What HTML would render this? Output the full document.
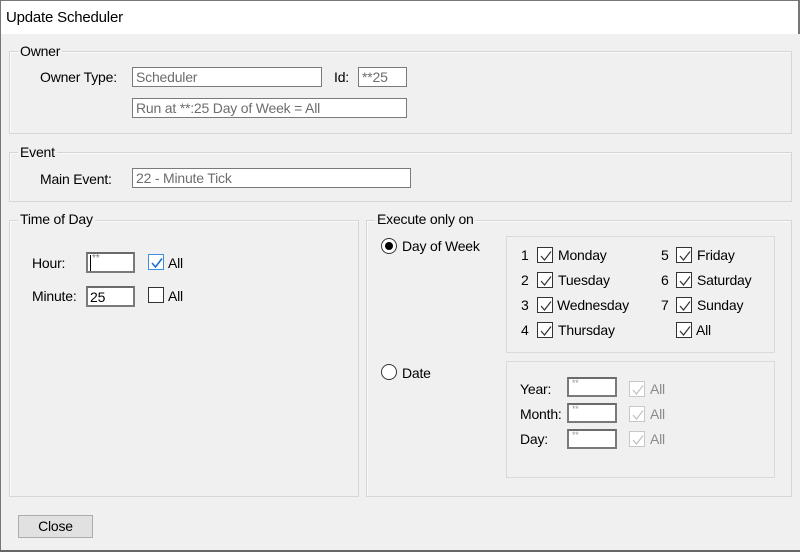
<!DOCTYPE html>
<html><head><style>
*{margin:0;padding:0;box-sizing:border-box}
body{width:800px;height:552px;background:#f0f0f0;font-family:"Liberation Sans",sans-serif;font-size:14px;color:#000;position:relative;overflow:hidden;letter-spacing:-0.2px}
.a{position:absolute;white-space:nowrap}
#title{position:absolute;left:0;top:0;width:800px;height:34px;background:#fff;border-top:1px solid #777;border-left:1px solid #777;border-right:2px solid #777}
.g{position:absolute;border:1px solid #d6d6d6;box-shadow:inset 1px 1px 0 #fafafa}
.lab{position:absolute;background:#f0f0f0;padding:0 2px;line-height:16px}
.in{position:absolute;background:#fff;border:1px solid #7a7a7a;height:20px;color:#6d6d6d;padding-left:3px;line-height:18px}
.gin{position:absolute;background:#fff;border:2px solid #7a7a7a;border-top-color:#6a6a6a}
.cb{position:absolute;width:16px;height:16px;border:1px solid #333;background:#fff}
.cb svg{position:absolute;left:1px;top:1px}
.dis{border-color:#c8c8c8}
.rb{position:absolute;width:16px;height:16px;border:1px solid #333;border-radius:50%;background:#fff}
.ib{position:absolute;border:1px solid #dadada}
</style></head><body>
<div id="title"><div class="a" style="left:5px;top:8px;font-size:15px">Update Scheduler</div></div>
<div class="a" style="left:0;top:34px;width:1px;height:518px;background:#777"></div>
<div class="a" style="left:0;top:550px;width:800px;height:2px;background:#666"></div>

<div class="g" style="left:9px;top:51px;width:783px;height:83px"></div>
<div class="lab" style="left:18px;top:43px">Owner</div>
<div class="a" style="left:40px;top:69px">Owner Type:</div>
<div class="in" style="left:132px;top:67px;width:190px">Scheduler</div>
<div class="a" style="left:334px;top:69px">Id:</div>
<div class="in" style="left:358px;top:67px;width:49px">**25</div>
<div class="in" style="left:132px;top:98px;width:275px">Run at **:25 Day of Week = All</div>

<div class="g" style="left:9px;top:152px;width:783px;height:50px"></div>
<div class="lab" style="left:18px;top:144px">Event</div>
<div class="a" style="left:40px;top:171px">Main Event:</div>
<div class="in" style="left:132px;top:168px;width:279px">22 - Minute Tick</div>

<div class="g" style="left:9px;top:220px;width:350px;height:277px"></div>
<div class="lab" style="left:18px;top:211px">Time of Day</div>
<div class="a" style="left:32px;top:255px">Hour:</div>
<div class="gin" style="left:86px;top:252px;width:49px;height:21px"><div class="a" style="left:2px;top:1px;width:1px;height:16px;background:#000"></div><div class="a" style="left:4px;top:-1px;font-size:10px;color:#777">**</div></div>
<div class="cb" style="left:148px;top:254px;border-color:#3c8ee0"><svg width="14" height="14"><path d="M2 7 L5.5 11 L12 2.5" stroke="#1e6fd0" stroke-width="1.6" fill="none"/></svg></div>
<div class="a" style="left:168px;top:255px">All</div>
<div class="a" style="left:32px;top:288px">Minute:</div>
<div class="gin" style="left:86px;top:286px;width:49px;height:21px"><div class="a" style="left:2px;top:1px">25</div></div>
<div class="cb" style="left:148px;top:287px"></div>
<div class="a" style="left:168px;top:288px">All</div>

<div class="g" style="left:366px;top:220px;width:426px;height:277px"></div>
<div class="lab" style="left:375px;top:211px">Execute only on</div>
<div class="rb" style="left:381px;top:238px"><div class="a" style="left:3px;top:3px;width:8px;height:8px;border-radius:50%;background:#000"></div></div>
<div class="a" style="left:402px;top:238px">Day of Week</div>
<div class="ib" style="left:506px;top:236px;width:269px;height:117px"></div>

<div class="a" style="left:521px;top:247px">1</div><div class="cb" style="left:537px;top:247px"><svg width="14" height="14"><path d="M2 7 L5.5 11 L12 2.5" stroke="#333" stroke-width="1.2" fill="none"/></svg></div><div class="a" style="left:558px;top:247px">Monday</div>
<div class="a" style="left:521px;top:272px">2</div><div class="cb" style="left:537px;top:272px"><svg width="14" height="14"><path d="M2 7 L5.5 11 L12 2.5" stroke="#333" stroke-width="1.2" fill="none"/></svg></div><div class="a" style="left:558px;top:272px">Tuesday</div>
<div class="a" style="left:521px;top:297px">3</div><div class="cb" style="left:537px;top:297px"><svg width="14" height="14"><path d="M2 7 L5.5 11 L12 2.5" stroke="#333" stroke-width="1.2" fill="none"/></svg></div><div class="a" style="left:557px;top:297px">Wednesday</div>
<div class="a" style="left:521px;top:322px">4</div><div class="cb" style="left:537px;top:322px"><svg width="14" height="14"><path d="M2 7 L5.5 11 L12 2.5" stroke="#333" stroke-width="1.2" fill="none"/></svg></div><div class="a" style="left:558px;top:322px">Thursday</div>
<div class="a" style="left:661px;top:247px">5</div><div class="cb" style="left:676px;top:247px"><svg width="14" height="14"><path d="M2 7 L5.5 11 L12 2.5" stroke="#333" stroke-width="1.2" fill="none"/></svg></div><div class="a" style="left:697px;top:247px">Friday</div>
<div class="a" style="left:661px;top:272px">6</div><div class="cb" style="left:676px;top:272px"><svg width="14" height="14"><path d="M2 7 L5.5 11 L12 2.5" stroke="#333" stroke-width="1.2" fill="none"/></svg></div><div class="a" style="left:697px;top:272px">Saturday</div>
<div class="a" style="left:661px;top:297px">7</div><div class="cb" style="left:676px;top:297px"><svg width="14" height="14"><path d="M2 7 L5.5 11 L12 2.5" stroke="#333" stroke-width="1.2" fill="none"/></svg></div><div class="a" style="left:697px;top:297px">Sunday</div>
<div class="cb" style="left:676px;top:322px"><svg width="14" height="14"><path d="M2 7 L5.5 11 L12 2.5" stroke="#333" stroke-width="1.2" fill="none"/></svg></div><div class="a" style="left:696px;top:322px">All</div>

<div class="rb" style="left:381px;top:364px"></div>
<div class="a" style="left:402px;top:365px">Date</div>
<div class="ib" style="left:506px;top:361px;width:269px;height:117px"></div>
<div class="a" style="left:520px;top:381px">Year:</div>
<div class="gin" style="left:567px;top:377px;width:50px;height:20px"><div class="a" style="left:3px;top:-1px;font-size:9px;color:#999">**</div></div>
<div class="cb dis" style="left:629px;top:381px"><svg width="14" height="14"><path d="M2 7 L5.5 11 L12 2.5" stroke="#c0c0c0" stroke-width="1.2" fill="none"/></svg></div><div class="a" style="left:650px;top:381px;color:#8a8a8a">All</div>
<div class="a" style="left:520px;top:406px">Month:</div>
<div class="gin" style="left:567px;top:403px;width:50px;height:20px"><div class="a" style="left:3px;top:-1px;font-size:9px;color:#999">**</div></div>
<div class="cb dis" style="left:629px;top:406px"><svg width="14" height="14"><path d="M2 7 L5.5 11 L12 2.5" stroke="#c0c0c0" stroke-width="1.2" fill="none"/></svg></div><div class="a" style="left:650px;top:406px;color:#8a8a8a">All</div>
<div class="a" style="left:520px;top:431px">Day:</div>
<div class="gin" style="left:567px;top:429px;width:50px;height:20px"><div class="a" style="left:3px;top:-1px;font-size:9px;color:#999">**</div></div>
<div class="cb dis" style="left:629px;top:431px"><svg width="14" height="14"><path d="M2 7 L5.5 11 L12 2.5" stroke="#c0c0c0" stroke-width="1.2" fill="none"/></svg></div><div class="a" style="left:650px;top:431px;color:#8a8a8a">All</div>

<div class="a" style="left:18px;top:515px;width:75px;height:23px;background:#e1e1e1;border:1px solid #adadad;text-align:center;line-height:21px">Close</div>
</body></html>
